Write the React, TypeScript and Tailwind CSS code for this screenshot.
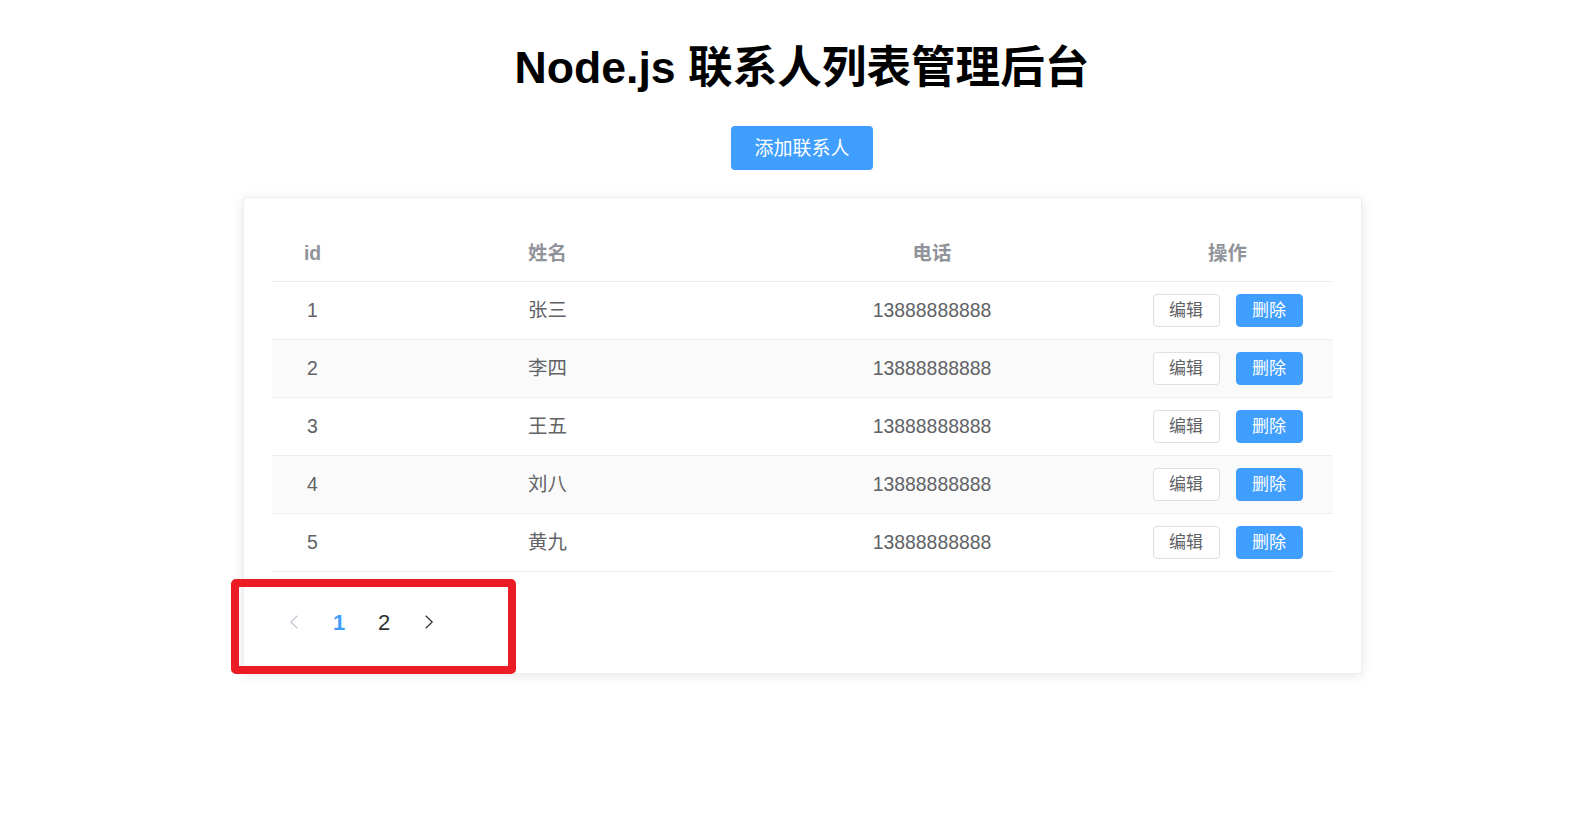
import React from "react";

const rows = [
  { id: 1, name: "张三", phone: "13888888888" },
  { id: 2, name: "李四", phone: "13888888888" },
  { id: 3, name: "王五", phone: "13888888888" },
  { id: 4, name: "刘八", phone: "13888888888" },
  { id: 5, name: "黄九", phone: "13888888888" },
];

export default function App() {
  return (
    <div className="min-h-screen bg-white pl-[19px] font-['Liberation_Sans','Noto_Sans_CJK_SC',sans-serif]">
      <div className="flex flex-col items-center">
        <h1 className="mt-[46px] text-[44.6px] leading-[44px] font-bold text-black">
          Node.js 联系人列表管理后台
        </h1>
        <button className="mt-[36px] h-[44px] w-[142px] rounded-[4px] bg-[#409EFF] text-[19px] leading-none text-white">
          添加联系人
        </button>
        <div className="relative mt-[27px] w-[1119px] rounded-[4px] border border-[#EBEEF5] bg-white px-[28px] pt-[28px] pb-[29px] shadow-[0_2px_12px_0_rgba(0,0,0,0.1)]">
          <div className="grid h-[56px] grid-cols-[82px_388px_381px_1fr] items-center border-b border-[#EBEEF5] text-center text-[19.4px] font-bold text-[#909399]">
            <div>id</div>
            <div>姓名</div>
            <div>电话</div>
            <div>操作</div>
          </div>
          {rows.map((r, i) => (
            <div
              key={r.id}
              className={`grid h-[58px] grid-cols-[82px_388px_381px_1fr] items-center border-b border-[#EBEEF5] text-center text-[19.4px] text-[#606266] ${
                i % 2 === 1 ? "bg-[#FAFAFA]" : "bg-white"
              }`}
            >
              <div>{r.id}</div>
              <div>{r.name}</div>
              <div>{r.phone}</div>
              <div className="flex items-center justify-center gap-[16px]">
                <button className="flex h-[33px] w-[67px] items-center justify-center rounded-[4px] border border-[#DCDFE6] bg-white text-[17px] leading-none text-[#606266]">
                  编辑
                </button>
                <button className="flex h-[33px] w-[67px] items-center justify-center rounded-[4px] border border-[#409EFF] bg-[#409EFF] text-[17px] leading-none text-white">
                  删除
                </button>
              </div>
            </div>
          ))}
          <div className="mt-[28px] flex h-[44px] items-center">
            <div className="flex h-[44px] w-[45px] items-center justify-center">
              <svg width="10" height="14" viewBox="0 0 10 14" fill="none">
                <path d="M8.3 0.8 L1.8 7 L8.3 13.2" stroke="#C0C4CC" strokeWidth="1.2" />
              </svg>
            </div>
            <div className="flex h-[44px] w-[45px] items-center justify-center text-[22px] font-bold text-[#409EFF]">
              1
            </div>
            <div className="flex h-[44px] w-[45px] items-center justify-center text-[22px] text-[#303133]">
              2
            </div>
            <div className="flex h-[44px] w-[45px] items-center justify-center">
              <svg width="10" height="14" viewBox="0 0 10 14" fill="none">
                <path d="M1.7 0.8 L8.2 7 L1.7 13.2" stroke="#303133" strokeWidth="1.2" />
              </svg>
            </div>
          </div>
          <div className="pointer-events-none absolute left-[-13px] top-[381px] h-[95px] w-[285px] rounded-[5px] border-[8px] border-[#EC1C24]" />
        </div>
      </div>
    </div>
  );
}
